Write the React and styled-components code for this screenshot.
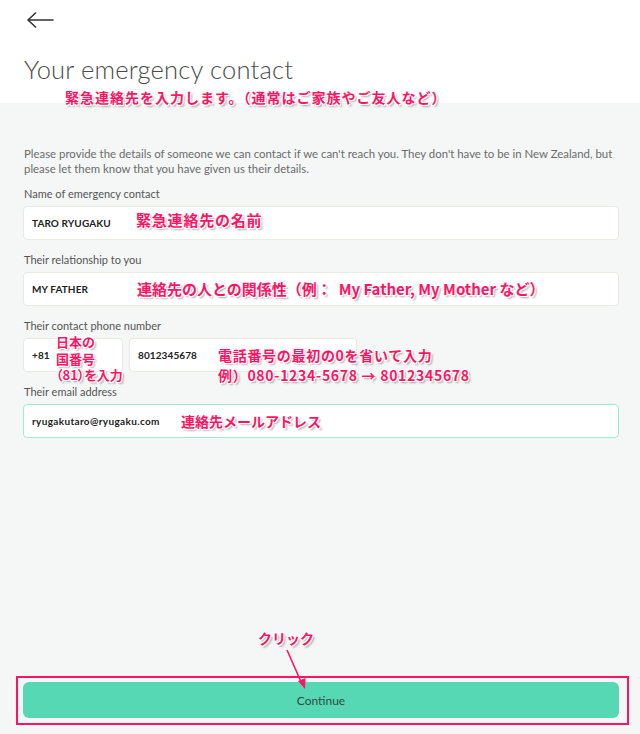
import React from "react";
import styled, { createGlobalStyle } from "styled-components";

const Global = createGlobalStyle`
  html, body { margin: 0; padding: 0; background: #f4f7f6; }
  body { font-family: Lato, "Noto Sans", sans-serif; color: #333; }
  * { box-sizing: border-box; }
`;

const PINK = "#ff1464";

const Page = styled.div`
  width: 640px;
  min-height: 734px;
  display: flex;
  flex-direction: column;
`;

const Header = styled.header`
  position: relative;
  height: 103px;
  background: #fff;
  padding: 12px 24px 0 24px;
  display: flex;
  flex-direction: column;
`;

const BackButton = styled.button`
  width: 28px;
  height: 16px;
  margin-left: 2px;
  padding: 0;
  border: 0;
  background: none;
  display: flex;
  cursor: pointer;
`;

const Title = styled.h1`
  margin: 26px 0 0 0;
  font-family: Lato, sans-serif;
  font-weight: 300;
  font-size: 25.5px;
  line-height: 30px;
  color: #4a4a4a;
  letter-spacing: 0.2px;
`;

const Note = styled.div`
  position: absolute;
  left: ${(p) => p.$x}px;
  top: ${(p) => p.$y}px;
  font-family: "Noto Sans CJK JP", sans-serif;
  font-weight: 700;
  font-size: ${(p) => p.$size || 14}px;
  line-height: ${(p) => p.$lh || 20}px;
  letter-spacing: ${(p) => p.$ls ?? 0.3}px;
  font-feature-settings: ${(p) => (p.$palt ? '"palt"' : "normal")};
  color: ${PINK};
  white-space: nowrap;
  pointer-events: none;
  text-shadow: 1px 1px 0 #fff, -1px -1px 0 #fff, 1px -1px 0 #fff, -1px 1px 0 #fff,
    2px 2px 2px rgba(0, 0, 0, 0.35);
  z-index: 2;
`;

const Main = styled.main`
  flex: 1;
  background: #f4f7f6;
  display: flex;
  flex-direction: column;
  padding: 43px 0 9px 0;
`;

const Content = styled.section`
  padding: 0 21px 0 23px;
  display: flex;
  flex-direction: column;
  gap: 13px;
  flex: 1;
`;

const Intro = styled.p`
  margin: 0 0 -2px 1px;
  font-size: 11.4px;
  line-height: 15px;
  color: #6b6b6b;
`;

const Field = styled.div`
  display: flex;
  flex-direction: column;
  gap: 5px;
`;

const Label = styled.label`
  font-size: 11px;
  line-height: 14px;
  color: #555;
  margin-left: 1px;
`;

const Row = styled.div`
  position: relative;
  display: flex;
  gap: 6px;
`;

const Box = styled.div`
  position: relative;
  height: 34px;
  width: ${(p) => (p.$w ? `${p.$w}px` : "100%")};
  background: #fff;
  border: 1px solid ${(p) => (p.$focus ? "#a6e9d2" : "#ebe9e4")};
  border-radius: 4px;
  display: flex;
  align-items: center;
  padding: 0 8px;
  font-size: 10px;
  font-weight: 700;
  color: #222;
  letter-spacing: ${(p) => (p.$focus ? 0.35 : 0.1)}px;
`;

const Footer = styled.div`
  position: relative;
  padding: 0 11px 0 16px;
`;

const Highlight = styled.div`
  border: 2px solid ${PINK};
  padding: 4px 8px 5px 5px;
`;

const ContinueButton = styled.button`
  width: 100%;
  height: 36px;
  border: 0;
  border-radius: 6px;
  background: #57d8b5;
  color: #2f4a43;
  font-family: Lato, sans-serif;
  font-size: 12px;
  cursor: pointer;
`;

const Pointer = styled.svg`
  position: absolute;
  left: 280px;
  top: -28px;
  z-index: 2;
`;

export default function App() {
  return (
    <Page>
      <Global />
      <Header>
        <BackButton aria-label="Back">
          <svg width="28" height="16" viewBox="0 0 28 16" fill="none">
            <path d="M27 8H2M9.5 1L2 8l7.5 7" stroke="#333" strokeWidth="1.6" strokeLinecap="round" strokeLinejoin="round" />
          </svg>
        </BackButton>
        <Title>Your emergency contact</Title>
        <Note $x={65} $y={87} $size={14} $ls={1}>
          緊急連絡先を入力します。（通常はご家族やご友人など）
        </Note>
      </Header>
      <Main>
        <Content>
          <Intro>
            Please provide the details of someone we can contact if we can't reach you. They don't have to be in New Zealand, but
            please let them know that you have given us their details.
          </Intro>
          <Field>
            <Label>Name of emergency contact</Label>
            <Box>
              TARO RYUGAKU
              <Note $x={112} $y={3} $size={15} $ls={0.8}>緊急連絡先の名前</Note>
            </Box>
          </Field>
          <Field>
            <Label>Their relationship to you</Label>
            <Box>
              MY FATHER
              <Note $x={113} $y={6} $size={15} $ls={0}>連絡先の人との関係性（例：&nbsp;&nbsp;My Father, My Mother など）</Note>
            </Box>
          </Field>
          <Field>
            <Label>Their contact phone number</Label>
            <Row>
              <Box $w={100}>+81</Box>
              <Box $w={228}>8012345678</Box>
              <Note $x={33} $y={-4} $size={13} $lh={16.5} $ls={0} $palt>
                日本の<br />国番号<br />（81）を入力
              </Note>
              <Note $x={195} $y={7} $size={14} $lh={20} $ls={0.7}>
                電話番号の最初の0を省いて入力<br />例）080-1234-5678 → 8012345678
              </Note>
            </Row>
          </Field>
          <Field>
            <Label>Their email address</Label>
            <Box $focus>
              ryugakutaro@ryugaku.com
              <Note $x={157} $y={6} $size={14} $ls={0}>連絡先メールアドレス</Note>
            </Box>
          </Field>
        </Content>
        <Footer>
          <Note $x={258} $y={-48} $size={14} $ls={0}>クリック</Note>
          <Pointer width="40" height="44" viewBox="0 0 40 44">
            <path d="M7 2 L22 36" stroke={PINK} strokeWidth="1.6" />
            <path d="M18 33 L25 41 L25.5 30 Z" fill={PINK} />
          </Pointer>
          <Highlight>
            <ContinueButton>Continue</ContinueButton>
          </Highlight>
        </Footer>
      </Main>
    </Page>
  );
}
